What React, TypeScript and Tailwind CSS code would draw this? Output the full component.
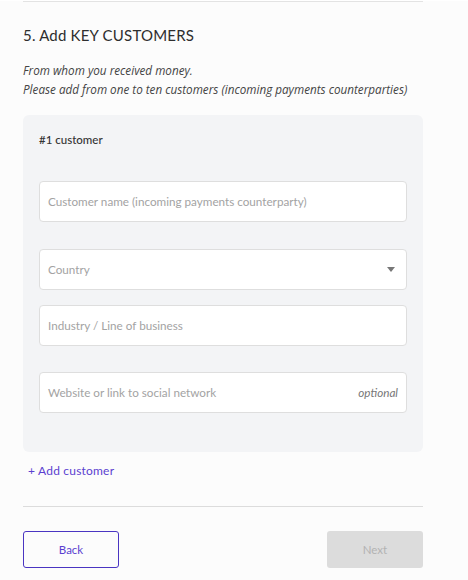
import React from 'react';

const fieldBox = 'h-[41px] w-full rounded-[4px] border border-[#dedede] bg-white px-2 flex items-center text-[11.7px] text-[#a3a3a3]';

const App = () => {
    return (
        <div className="min-h-[580px] w-[468px] bg-[#fcfcfc] font-['Lato',sans-serif] text-[#333]">
            <div className="ml-[23px] w-[400px]">
                <div className="h-[2px] border-t border-[#e3e3e3] mt-[1px]"></div>

                {/* Heading */}
                <h2 className="mt-[22px] text-[15px] leading-[20px] text-[#2e2e2e] tracking-[0.2px]">5. Add KEY CUSTOMERS</h2>
                <div className="mt-[16px] font-['Open_Sans',sans-serif] text-[11.7px] leading-[19px] italic text-[#444]">
                    <p>From whom you received money.</p>
                    <p className="whitespace-nowrap">Please add from one to ten customers (incoming payments counterparties)</p>
                </div>

                {/* Customer card */}
                <div className="mt-[16px] h-[337px] rounded-[6px] bg-[#f3f4f6] px-4 pt-[17px]">
                    <p className="text-[11.5px] leading-[16px] text-[#333] font-medium">#1 customer</p>
                    <div className={`mt-[33px] ${fieldBox}`}>Customer name (incoming payments counterparty)</div>
                    <div className={`mt-[27px] ${fieldBox} justify-between text-[#666]`}>
                        <span>Country</span>
                        <svg width="8" height="5" viewBox="0 0 8 5" className="mr-[3px]">
                            <path d="M0 0h8L4 5z" fill="#777" />
                        </svg>
                    </div>
                    <div className={`mt-[15px] ${fieldBox}`}>Industry / Line of business</div>
                    <div className={`mt-[26px] ${fieldBox} justify-between`}>
                        <span>Website or link to social network</span>
                        <span className="italic text-[#777]">optional</span>
                    </div>
                </div>

                <button className="mt-[12px] ml-[5px] text-[12px] leading-[14px] text-[#5b3fd0] tracking-[0.2px]">+ Add customer</button>

                <div className="mt-[25px] border-t border-[#dcdcdc]"></div>

                {/* Footer buttons */}
                <div className="mt-[24px] flex justify-between">
                    <button className="h-[37px] w-[96px] rounded-[3px] border border-[#4a35c2] text-[11.5px] text-[#5b3fd0]">Back</button>
                    <button className="h-[37px] w-[96px] rounded-[3px] bg-[#dcdcdc] text-[11.5px] text-[#b3b3b3]">Next</button>
                </div>
            </div>
        </div>
    );
};

export default App;
